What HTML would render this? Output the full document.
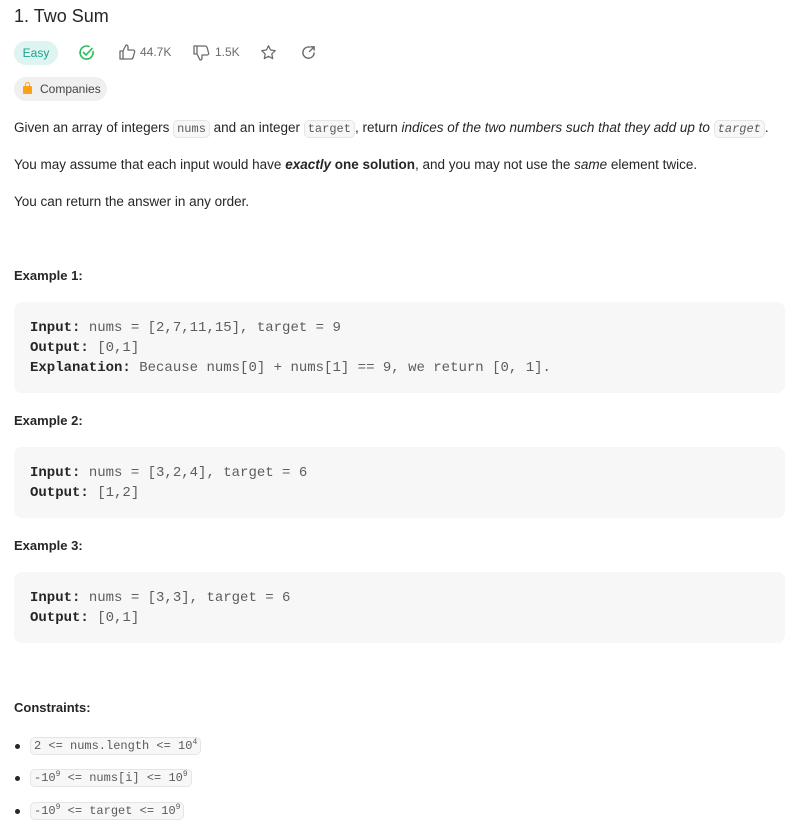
<!DOCTYPE html>
<html><head><meta charset="utf-8"><style>
body{margin:0;width:785px;height:827px;background:#fff;font-family:"Liberation Sans",sans-serif;color:#262626;font-size:13.5px;position:relative;overflow:hidden}
.a{position:absolute;white-space:nowrap}
code,.m{font-family:"Liberation Mono",monospace}
.ic{font-size:12px;color:#5a5a5a;background:#f7f7f8;border:1px solid #e5e5e5;border-radius:5px;padding:1px 3px}
.pre{position:absolute;left:14px;width:771px;background:#f7f7f8;border-radius:8px}
.pre div{position:absolute;left:16px;font-family:"Liberation Mono",monospace;font-size:14px;color:#5d5d5d;white-space:nowrap;line-height:20px}
.pre b{color:#262626}
.lbl{font-weight:bold;font-size:13px}
.dot{position:absolute;left:15px;width:5px;height:5px;border-radius:50%;background:#262626}
sup{font-size:8px}
</style></head><body>
<div class="a" style="left:14px;top:6px;font-size:18px;font-weight:500">1. Two Sum</div>
<div class="a" style="left:14px;top:41px;width:44px;height:24px;border-radius:12px;background:#def4f1;color:#1aa293;font-size:12px;line-height:24px;text-align:center">Easy</div>
<svg class="a" style="left:78px;top:44px" width="17" height="17" viewBox="0 0 17 17" fill="none" stroke="#2cbb5d" stroke-width="1.6" stroke-linecap="round"><path d="M15 7.5A6.5 6.5 0 1 1 11 2.5"/><path d="M5.5 8.5l2.5 2.5 6-6.5"/></svg>
<svg class="a" style="left:119px;top:44px" width="17" height="16" viewBox="0 0 17 16" fill="none" stroke="#6b6b6b" stroke-width="1.3" stroke-linejoin="round"><path d="M1 7h3v8H1zM4 7l3-6c1.5 0 2 1 2 2v3h5c1 0 2 1 1.6 2l-1.5 5.5c-.3.8-1 1.5-2 1.5H4"/></svg>
<div class="a" style="left:140px;top:45px;font-size:12px;color:#6b6b6b">44.7K</div>
<svg class="a" style="left:193px;top:45px" width="17" height="16" viewBox="0 0 17 16" fill="none" stroke="#6b6b6b" stroke-width="1.3" stroke-linejoin="round"><path d="M1 1h3v8H1zM4 9l3 6c1.5 0 2-1 2-2v-3h5c1 0 2-1 1.6-2L14.1 2.5C13.8 1.7 13.1 1 12 1H4"/></svg>
<div class="a" style="left:215px;top:45px;font-size:12px;color:#6b6b6b">1.5K</div>
<svg class="a" style="left:260px;top:44px" width="17" height="17" viewBox="0 0 24 24" fill="none" stroke="#6b6b6b" stroke-width="1.8" stroke-linejoin="round"><path d="M12 2.5l2.9 6 6.6.9-4.8 4.6 1.2 6.6L12 17.4l-5.9 3.2 1.2-6.6L2.5 9.4l6.6-.9z"/></svg>
<svg class="a" style="left:301px;top:45px" width="15" height="15" viewBox="0 0 16 16" fill="none" stroke="#6b6b6b" stroke-width="1.5" stroke-linecap="round"><path d="M14 8.5A6 6 0 1 1 9 2.2"/><path d="M9 7l5-5M10.5 2H14v3.5"/></svg>
<div class="a" style="left:14px;top:77px;width:93px;height:24px;border-radius:12px;background:#f0f0f0;font-size:12px;line-height:24px;color:#444"><span style="position:absolute;left:9px;top:9px;width:9px;height:8px;background:#ffa116;border-radius:1px"></span><span style="position:absolute;left:11px;top:5px;width:3px;height:4px;border:1.5px solid #ffa116;border-bottom:none;border-radius:3px 3px 0 0"></span><span style="position:absolute;left:26px">Companies</span></div>
<div class="a" style="left:14px;top:120px">Given an array of integers <code class="ic">nums</code> and an integer <code class="ic">target</code>, return <i>indices of the two numbers such that they add up to <code class="ic">target</code></i>.</div>
<div class="a" style="left:14px;top:157px">You may assume that each input would have <b><i>exactly</i> one solution</b>, and you may not use the <i>same</i> element twice.</div>
<div class="a" style="left:14px;top:194px">You can return the answer in any order.</div>
<div class="a lbl" style="left:14px;top:268px">Example 1:</div>
<div class="pre" style="top:302px;height:91px"><div style="top:16px"><b>Input:</b> nums = [2,7,11,15], target = 9<br><b>Output:</b> [0,1]<br><b>Explanation:</b> Because nums[0] + nums[1] == 9, we return [0, 1].</div></div>
<div class="a lbl" style="left:14px;top:413px">Example 2:</div>
<div class="pre" style="top:447px;height:71px"><div style="top:16px"><b>Input:</b> nums = [3,2,4], target = 6<br><b>Output:</b> [1,2]</div></div>
<div class="a lbl" style="left:14px;top:538px">Example 3:</div>
<div class="pre" style="top:572px;height:71px"><div style="top:16px"><b>Input:</b> nums = [3,3], target = 6<br><b>Output:</b> [0,1]</div></div>
<div class="a lbl" style="left:14px;top:700px">Constraints:</div>
<div class="dot" style="top:744px"></div><div class="a" style="left:30px;top:737px"><code class="ic">2 &lt;= nums.length &lt;= 10<sup>4</sup></code></div>
<div class="dot" style="top:776px"></div><div class="a" style="left:30px;top:769px"><code class="ic">-10<sup>9</sup> &lt;= nums[i] &lt;= 10<sup>9</sup></code></div>
<div class="dot" style="top:809px"></div><div class="a" style="left:30px;top:802px"><code class="ic">-10<sup>9</sup> &lt;= target &lt;= 10<sup>9</sup></code></div>
</body></html>
